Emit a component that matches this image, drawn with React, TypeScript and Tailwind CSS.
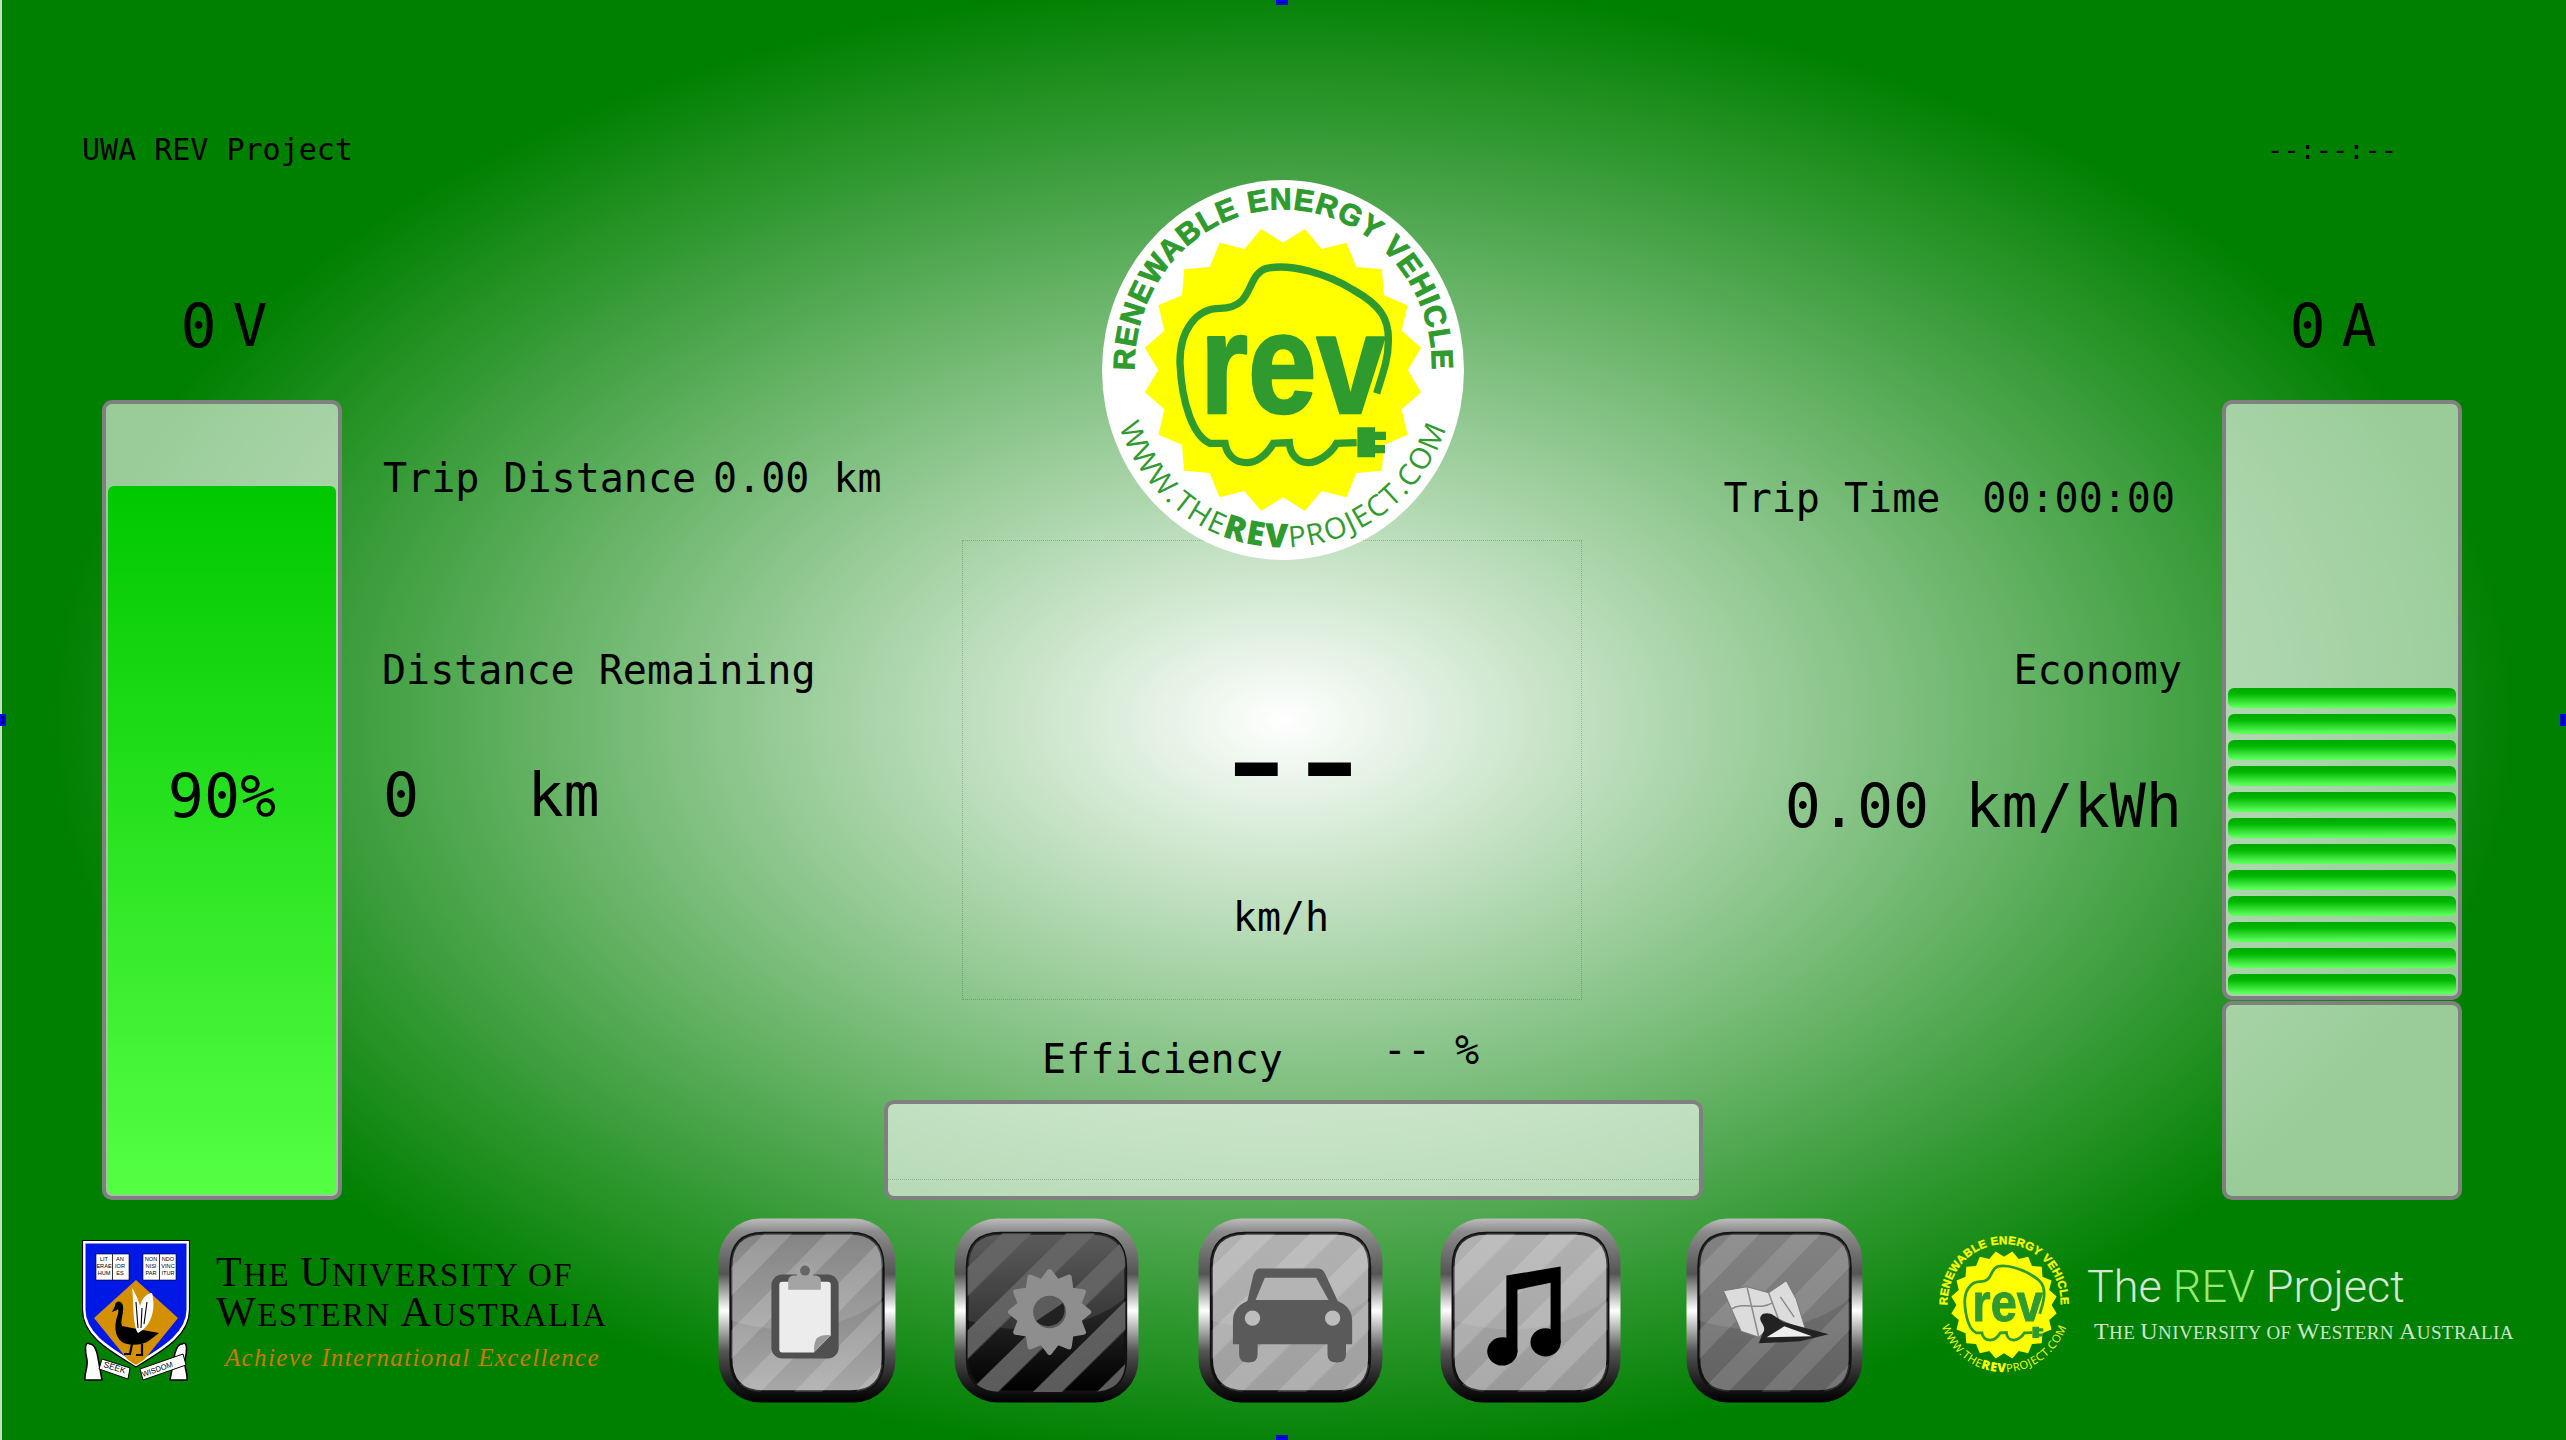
const mono = "font-['DejaVu_Sans_Mono',monospace]"
const serif = "font-['Liberation_Serif',serif]"

const GREEN = '#2f9b2f'

function ringPoints(cx: number, cy: number, outer: number, inner: number, count: number, rx = 1, start = 0) {
  const pts: string[] = []
  for (let i = 0; i < count * 2; i++) {
    const a = start + (Math.PI * i) / count
    const r = i % 2 === 0 ? outer : inner
    pts.push(`${(cx + Math.sin(a) * r * rx).toFixed(1)},${(cy - Math.cos(a) * r).toFixed(1)}`)
  }
  return pts.join(' ')
}

function RevLogo({ id, badge, className }: { id: string; badge?: boolean; className: string }) {
  const ring = badge ? GREEN : '#ffff00'
  return (
    <svg viewBox="126 60 1086 1140" preserveAspectRatio="none" className={className}>
      <defs>
        <path id={`${id}-top`} d="M 248 770 A 446 470 0 1 1 1092 770" />
        <path id={`${id}-bot`} d="M 154 560 A 519 536 0 1 0 1184 560" />
      </defs>
      {badge && <ellipse cx="669" cy="630" rx="543" ry="570" fill="#fff" />}
      <polygon points={ringPoints(669, 630, 428, 382, 20, 0.98, Math.PI / 20)} fill="#ffff00" />
      <path
        d="M 890 848 L 830 850 C 810 885 770 908 745 908 C 715 908 690 885 688 848 L 640 850 C 620 885 590 908 560 908 C 525 908 500 885 495 850 L 450 850 C 400 830 365 730 360 610 C 358 510 410 445 480 445 C 585 445 555 345 620 325 C 690 310 800 340 880 390 C 960 435 988 475 985 545 C 985 600 965 650 950 700"
        fill="none"
        stroke={GREEN}
        strokeWidth="22"
      />
      <text
        x="420"
        y="760"
        textLength="555"
        lengthAdjust="spacingAndGlyphs"
        fontFamily="'Liberation Sans', sans-serif"
        fontWeight="700"
        fontSize="430"
        fill={GREEN}
        stroke={GREEN}
        strokeWidth="8"
        strokeLinejoin="round"
      >
        rev
      </text>
      <path d="M 892 802 H 945 V 815 H 978 V 840 H 945 V 855 H 975 V 880 H 945 V 892 H 892 Z" fill={GREEN} />
      <text
        fontFamily="'Liberation Sans', sans-serif"
        fontWeight="700"
        fontSize="90"
        fill={ring}
        stroke={ring}
        strokeWidth="3"
        letterSpacing="3"
      >
        <textPath href={`#${id}-top`} startOffset="50%" textAnchor="middle">
          RENEWABLE ENERGY VEHICLE
        </textPath>
      </text>
      <text fontFamily="'Open Sans', sans-serif" fontSize="88" fill={ring} letterSpacing="5">
        <textPath href={`#${id}-bot`} startOffset="50%" textAnchor="middle">
          WWW.THE<tspan fontWeight="800" fontSize="100">REV</tspan>PROJECT.COM
        </textPath>
      </text>
    </svg>
  )
}

function Crest() {
  const shield = 'M 2 2 H 106 V 70 C 106 95 78 110 54 125 C 30 110 2 95 2 70 Z'
  return (
    <svg viewBox="0 0 108 142" className="w-[108px] h-[142px] shrink-0">
      <defs>
        <clipPath id="shield-clip">
          <path d={shield} />
        </clipPath>
      </defs>
      <path d={shield} fill="#0018e6" stroke="#fff" strokeWidth="3" />
      <path d="M 0.5 0.5 H 107.5 V 70 C 107.5 97 78 112 54 127 C 30 112 0.5 97 0.5 70 Z" fill="none" stroke="#000" strokeWidth="1.2" />
      <g clipPath="url(#shield-clip)">
        <polygon points="54,40 96,78 54,130 12,78" fill="#d49000" />
      </g>
      <g fontFamily="'Liberation Sans', sans-serif" fontSize="5.6" textAnchor="middle" fill="#000">
        <rect x="14" y="14" width="33" height="26" fill="#fff" stroke="#000" strokeWidth="0.6" />
        <line x1="30.5" y1="14" x2="30.5" y2="40" stroke="#000" strokeWidth="0.8" />
        <text x="22" y="21">LIT</text>
        <text x="38" y="21">AN</text>
        <text x="22" y="28">ERAE</text>
        <text x="38" y="28">IOR</text>
        <text x="22" y="35">HUM</text>
        <text x="38" y="35">ES</text>
        <rect x="61" y="14" width="33" height="26" fill="#fff" stroke="#000" strokeWidth="0.6" />
        <line x1="77.5" y1="14" x2="77.5" y2="40" stroke="#000" strokeWidth="0.8" />
        <text x="69" y="21">NON</text>
        <text x="86" y="21">NDO</text>
        <text x="69" y="28">NISI</text>
        <text x="86" y="28">VINC</text>
        <text x="69" y="35">PAR</text>
        <text x="86" y="35">ITUR</text>
      </g>
      <path d="M 30 72 L 33 66 C 33 60 40 60 41 66 C 42 74 38 80 40 86 L 50 88 L 77 93 L 68 100 C 60 106 46 106 40 102 C 32 96 32 84 36 74 C 37 70 36 68 35 70 Z" fill="#000" />
      <path d="M 50 48 C 54 54 57 62 58 66 C 60 58 64 54 70 53 C 74 68 70 86 56 93 C 50 84 52 60 50 48 Z" fill="#fff" />
      <path d="M 54 62 L 56 88 M 60 68 L 59 88 M 65 62 L 62 84" stroke="#000" strokeWidth="1.1" />
      <path d="M 50 104 L 48 114 H 42 M 60 104 L 60 115 H 54" stroke="#000" strokeWidth="2.2" fill="none" />
      <path d="M 8 104 C 2 100 3 112 5 120 C 6 128 2 134 3 140 H 20 L 16 118 C 15 110 12 104 8 104 Z" fill="#fff" stroke="#000" strokeWidth="1.6" />
      <path d="M 100 104 C 106 100 105 112 103 120 C 102 128 106 134 105 140 H 88 L 92 118 C 93 110 96 104 100 104 Z" fill="#fff" stroke="#000" strokeWidth="1.6" />
      <polygon points="20,119 48,128 46,139 17,129" fill="#fff" stroke="#000" strokeWidth="1" />
      <polygon points="58,129 101,114 104,125 61,140" fill="#fff" stroke="#000" strokeWidth="1" />
      <text x="0" y="0" transform="translate(21 127) rotate(17)" fontFamily="'Liberation Sans', sans-serif" fontSize="8.5" fill="#000">SEEK</text>
      <text x="0" y="0" transform="translate(61 137) rotate(-19)" fontFamily="'Liberation Sans', sans-serif" fontSize="7.6" fill="#000">WISDOM</text>
    </svg>
  )
}

type Face = { id: string; top: string; bottom: string; stripe: string; stripeOpacity: number; glare: number }

function MetalButton({ face, className, children }: { face: Face; className: string; children: React.ReactNode }) {
  const inner = 'M 46 15 H 134 Q 167 15 167 48 V 139 Q 167 172 134 172 H 46 Q 13 172 13 139 V 48 Q 13 15 46 15 Z'
  return (
    <svg viewBox="0 0 180 183" preserveAspectRatio="none" className={className}>
      <defs>
        <linearGradient id={`metal-${face.id}`} x1="0" y1="0" x2="0" y2="1">
          <stop offset="0" stopColor="#bdbdbd" />
          <stop offset="0.07" stopColor="#8c8c8c" />
          <stop offset="0.3" stopColor="#555" />
          <stop offset="0.5" stopColor="#fff" />
          <stop offset="0.72" stopColor="#555" />
          <stop offset="0.9" stopColor="#1a1a1a" />
          <stop offset="1" stopColor="#000" />
        </linearGradient>
        <linearGradient id={`face-${face.id}`} x1="0" y1="0" x2="0" y2="1">
          <stop offset="0" stopColor={face.top} />
          <stop offset="1" stopColor={face.bottom} />
        </linearGradient>
        <pattern id={`stripes-${face.id}`} width="44" height="44" patternUnits="userSpaceOnUse" patternTransform="rotate(45)">
          <rect width="20" height="44" fill={face.stripe} />
        </pattern>
        <clipPath id={`clip-${face.id}`}>
          <path d={inner} />
        </clipPath>
      </defs>
      <rect x="0.5" y="0.5" width="179" height="182" rx="42" fill={`url(#metal-${face.id})`} />
      <path d={inner} fill={`url(#face-${face.id})`} stroke="#111" strokeWidth="3" />
      <g clipPath={`url(#clip-${face.id})`}>
        <ellipse cx="70" cy="42" rx="115" ry="68" fill="#fff" opacity={face.glare} />
        <rect x="0" y="0" width="180" height="183" fill={`url(#stripes-${face.id})`} opacity={face.stripeOpacity} />
      </g>
      {children}
    </svg>
  )
}

function Gear() {
  return (
    <g>
      <polygon points={ringPoints(93, 93, 40, 31, 12, 0.95)} fill="#8e8e8e" stroke="#8e8e8e" strokeWidth="5" strokeLinejoin="round" />
      <circle cx="93" cy="93" r="16" fill="#5c5c5c" />
      <path d="M 80 102 A 16 16 0 0 0 106 84 Z" fill="#222" />
    </g>
  )
}

function SmallCaps({ text, big, small }: { text: string; big: string; small: string }) {
  return (
    <>
      {text.split(/([A-Z]+)/).map((part, i) =>
        /^[A-Z]+$/.test(part) ? (
          <span key={i} className={big}>{part}</span>
        ) : (
          <span key={i} className={`${small} uppercase`}>{part}</span>
        ),
      )}
    </>
  )
}

function Handle({ className }: { className: string }) {
  return <div className={`absolute bg-[#000060] border-2 border-[#0000ff] ${className}`} />
}

const barShell = 'border-4 border-[#808080] rounded-[10px] bg-white/60'

const FACE_CLIP: Face = { id: 'clip', top: '#747474', bottom: '#a8a8a8', stripe: '#fff', stripeOpacity: 0.16, glare: 0.12 }
const FACE_GEAR: Face = { id: 'gear', top: '#4a4a4a', bottom: '#000', stripe: '#666', stripeOpacity: 0.9, glare: 0.1 }
const FACE_CAR: Face = { id: 'car', top: '#a8a8a8', bottom: '#a0a0a0', stripe: '#fff', stripeOpacity: 0.16, glare: 0.1 }
const FACE_MUSIC: Face = { id: 'music', top: '#a8a8a8', bottom: '#9a9a9a', stripe: '#fff', stripeOpacity: 0.16, glare: 0.1 }
const FACE_MAP: Face = { id: 'map', top: '#747474', bottom: '#626262', stripe: '#fff', stripeOpacity: 0.12, glare: 0.1 }

export default function App() {
  const segments = Array.from({ length: 12 })

  return (
    <div className={`relative w-[2566px] h-[1440px] overflow-hidden text-black ${mono} bg-[radial-gradient(ellipse_1230px_740px_at_center,#ffffff,#008000)] bg-[#008000] shadow-[inset_2px_0_0_#c8dcc8]`}>
      <Handle className="left-0 top-[714px] w-[6px] h-[12px]" />
      <Handle className="right-0 top-[714px] w-[6px] h-[12px]" />
      <Handle className="left-[1276px] top-0 w-[12px] h-[5px]" />
      <Handle className="left-[1276px] bottom-0 w-[12px] h-[5px]" />

      <div className="flex h-[1200px]">
        {/* left side */}
        <div className="w-[884px] pl-[102px] pt-[130px] flex flex-col">
          <div className="-ml-[20px] h-[40px] text-[30px] leading-[40px]">UWA REV Project</div>
          <div className="flex">
            <div className="w-[240px]">
              <div className="mt-[121px] mb-[39px] h-[70px] leading-[70px] flex justify-center pl-[4px]">
                <span className="text-[60px]">0</span>
                <span className="ml-[16px] text-[58px]">V</span>
              </div>
              <div className={`relative w-[240px] h-[800px] ${barShell} flex flex-col justify-end p-[2px]`}>
                <div className="h-[708px] rounded-[6px] bg-[linear-gradient(#00c800,#55ff44)]" />
                <div className="absolute inset-0 pb-[8px] flex items-center justify-center text-[60px]">90%</div>
              </div>
            </div>
            <div className="ml-[41px] pt-[288px]">
              <div className="text-[40px] leading-[40px] whitespace-pre">
                Trip Distance<span className="ml-[17px]">0.00 km</span>
              </div>
              <div className="mt-[152px] -ml-px text-[40px] leading-[40px]">Distance Remaining</div>
              <div className="mt-[70px] text-[60px] leading-[70px] whitespace-pre">0   km</div>
            </div>
          </div>
        </div>

        {/* centre */}
        <div className="w-[819px] flex flex-col">
          <RevLogo id="main" badge className="relative z-10 mt-[180px] ml-[218px] w-[362px] h-[380px] shrink-0" />
          <div className="-mt-[20px] ml-[78px] w-[620px] h-[460px] shrink-0 border border-dotted border-black/20 flex flex-col items-center">
            <div className="mt-[156px] ml-[14px] text-[168px] leading-[120px] tracking-[-28px]">--</div>
            <div className="mt-[80px] ml-[18px] text-[40px] leading-[40px]">km/h</div>
          </div>
          <div className="flex h-[100px] pt-[39px] pl-[158px] text-[40px] leading-[40px] whitespace-pre">
            <span>Efficiency</span>
            <span className="ml-[100px] -mt-[9px]">-- %</span>
          </div>
          <div className={`w-full h-[100px] ${barShell}`}>
            <div className="mt-[75px] border-t border-dotted border-black/20" />
          </div>
        </div>

        {/* right side */}
        <div className="flex-1 flex">
          <div className="w-[479px] pt-[478px] flex flex-col items-end">
            <div className="flex gap-[42px] pr-[7px] text-[40px] leading-[40px]">
              <span>Trip Time</span>
              <span>00:00:00</span>
            </div>
            <div className="mt-[132px] text-[40px] leading-[40px]">Economy</div>
            <div className="mt-[76px] text-[60px] leading-[80px]">0.00 km/kWh</div>
          </div>
          <div className="ml-[40px] w-[240px] pt-[130px]">
            <div className="h-[40px] leading-[40px] text-[27px] text-center pr-[20px]">--:--:--</div>
            <div className="mt-[121px] mb-[39px] h-[70px] leading-[70px] flex justify-center pr-[18px]">
              <span className="text-[60px]">0</span>
              <span className="ml-[16px] text-[58px]">A</span>
            </div>
            <div className={`w-[240px] h-[600px] ${barShell} flex flex-col justify-end gap-[6px] p-[2px]`}>
              {segments.map((_, i) => (
                <div key={i} className="h-[20px] rounded-[6px] bg-[linear-gradient(#00a800,#00b800_30%,#5cff5c_95%)]" />
              ))}
            </div>
            <div className={`mt-px w-[240px] h-[199px] ${barShell}`} />
          </div>
        </div>
      </div>

      {/* bottom strip */}
      <div className="flex h-[240px] pl-[82px]">
        <div className="mt-[40px] w-[636px] flex shrink-0">
          <Crest />
          <div className={`ml-[26px] ${serif}`}>
            <div className="mt-[12px] h-[40px] leading-[40px] tracking-[1.5px] whitespace-pre">
              <SmallCaps text="The University of" big="text-[42px]" small="text-[33px]" />
            </div>
            <div className="h-[40px] leading-[40px] tracking-[1.5px] whitespace-pre">
              <SmallCaps text="Western Australia" big="text-[42px]" small="text-[33px]" />
            </div>
            <div className="mt-[10px] ml-[9px] text-[25px] leading-[32px] italic tracking-[1.35px] text-[#cc7a00] whitespace-pre">
              Achieve International Excellence
            </div>
          </div>
        </div>

        <MetalButton face={FACE_CLIP} className="mt-[18px] w-[178px] h-[185px] shrink-0">
          <rect x="54" y="56" width="68" height="83" rx="11" fill="#505050" />
          <path d="M 62 66 Q 62 63 65 63 H 111 Q 114 63 114 66 V 116 L 97 133 H 65 Q 62 133 62 130 Z" fill="#ececec" />
          <path d="M 114 116 L 97 133 Q 97 122 100 119 Q 105 115 114 116 Z" fill="#9a9a9a" />
          <path d="M 71 71 V 62 Q 71 58 76 57 H 80 A 9 9 0 1 1 96 57 H 99 Q 104 58 104 62 V 71 Z" fill="#a4a4a4" />
          <circle cx="88" cy="52" r="5" fill="#666" />
        </MetalButton>

        <MetalButton face={FACE_GEAR} className="ml-[58px] mt-[18px] w-[185px] h-[185px] shrink-0">
          <Gear />
        </MetalButton>

        <MetalButton face={FACE_CAR} className="ml-[59px] mt-[18px] w-[185px] h-[185px] shrink-0">
          <path
            d="M 60 50 H 116 Q 122 50 124 56 L 136 82 Q 150 88 150 102 V 125 H 144 V 135 Q 144 143 135 143 Q 126 143 126 135 V 125 H 58 V 135 Q 58 143 49 143 Q 40 143 40 135 V 125 H 34 V 102 Q 34 88 48 82 L 54 56 Q 56 50 60 50 Z"
            fill="#5a5a5a"
          />
          <polygon points="65,59 115,59 127,81 56,81" fill="#b4b4b4" />
          <circle cx="53" cy="99" r="7.5" fill="#bdbdbd" />
          <circle cx="131" cy="99" r="7.5" fill="#bdbdbd" />
        </MetalButton>

        <MetalButton face={FACE_MUSIC} className="ml-[57px] mt-[18px] w-[181px] h-[185px] shrink-0">
          <path d="M 66 57 L 120 48 V 124 H 110 V 64 L 77 71 V 133 H 66 Z" fill="#000" />
          <ellipse cx="62" cy="132" rx="15" ry="14" fill="#000" />
          <ellipse cx="105" cy="123" rx="15" ry="14" fill="#000" />
        </MetalButton>

        <MetalButton face={FACE_MAP} className="ml-[65px] mt-[18px] w-[177px] h-[185px] shrink-0">
          <polygon points="38,72 62,68 84,74 102,62 112,80 122,112 94,100 74,118 56,112" fill="#dcdcdc" stroke="#777" strokeWidth="1" />
          <path d="M 62 68 L 74 118 M 84 74 L 94 100 M 46 90 C 60 82 74 92 88 84 M 96 78 L 110 98" stroke="#8a8a8a" strokeWidth="1.5" fill="none" />
          <path d="M 78 95 C 70 102 84 106 78 114 L 74 124 L 116 122 L 145 115 L 100 103 C 92 100 88 92 78 95 Z" fill="#222" />
          <path d="M 82 118 L 128 117 L 100 107 Z" fill="#eee" />
        </MetalButton>

        <RevLogo id="small" className="ml-[72px] mt-[33px] w-[138px] h-[144px] shrink-0" />

        <div className="ml-[14px] mt-[60px] whitespace-pre">
          <div className="font-['Roboto',sans-serif] font-light text-[45px] leading-[54px] text-[#d4e8d4]">
            The <span className="text-[#9be870]">REV</span> Project
          </div>
          <div className={`ml-[7px] mt-[3px] leading-[28px] tracking-[0.4px] text-[#cfe3cf] ${serif}`}>
            <SmallCaps text="The University of Western Australia" big="text-[24px]" small="text-[19px]" />
          </div>
        </div>
      </div>
    </div>
  )
}
